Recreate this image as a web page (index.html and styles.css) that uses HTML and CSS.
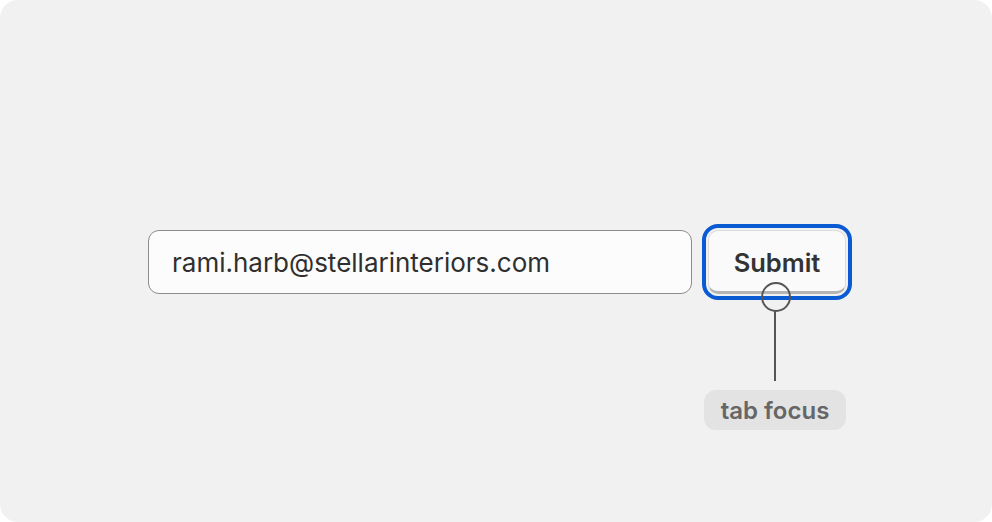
FILE: index.html
```html
<!DOCTYPE html>
<html>
<head>
<meta charset="utf-8">
<link rel="stylesheet" href="styles.css">
</head>
<body>
<div class="canvas">
  <div class="row">
    <div class="field">rami.harb@stellarinteriors.com</div>
    <div class="btn-wrap">
      <button class="btn">Submit</button>
      <div class="marker"></div>
      <div class="leader"></div>
      <div class="tag">tab focus</div>
    </div>
  </div>
</div>
</body>
</html>
```
FILE: styles.css
```css
html, body {
  margin: 0;
  padding: 0;
  background: #ffffff;
}
.canvas {
  width: 992px;
  height: 522px;
  background: #f1f1f1;
  border-radius: 18px;
  display: flex;
  align-items: center;
  justify-content: center;
  font-family: Inter, "Noto Sans", sans-serif;
}
.row {
  display: flex;
  gap: 16px;
  align-items: center;
  margin-left: 2px;
  margin-top: 2px;
}
.field {
  box-sizing: border-box;
  width: 544px;
  height: 64px;
  border: 1px solid #8c8c8c;
  border-radius: 11px;
  background: #fcfcfc;
  padding-left: 23px;
  padding-top: 1px;
  display: flex;
  align-items: center;
  font-size: 26px;
  color: #2f2f2f;
}
.btn-wrap {
  position: relative;
}
.btn {
  box-sizing: border-box;
  width: 138px;
  height: 64px;
  background: #fafafa;
  border: 1px solid #dcdcdc;
  border-bottom: 3px solid #b4b4b4;
  border-radius: 10px;
  font-family: Inter, "Noto Sans", sans-serif;
  font-weight: 600;
  font-size: 25.5px;
  color: #333333;
  outline: 4px solid #0a5ad4;
  outline-offset: 2px;
  padding: 2px 0 0 0;
  display: block;
}
.marker {
  position: absolute;
  left: 53px;
  top: 52px;
  width: 26px;
  height: 26px;
  border: 2px solid #555555;
  border-radius: 50%;
}
.leader {
  position: absolute;
  left: 66px;
  top: 80px;
  width: 2px;
  height: 71px;
  background: #555555;
}
.tag {
  position: absolute;
  left: -4px;
  top: 160px;
  width: 142px;
  height: 40px;
  border-radius: 12px;
  background: #e3e3e3;
  color: #666666;
  font-weight: 600;
  font-size: 24px;
  display: flex;
  align-items: center;
  justify-content: center;
}
```
